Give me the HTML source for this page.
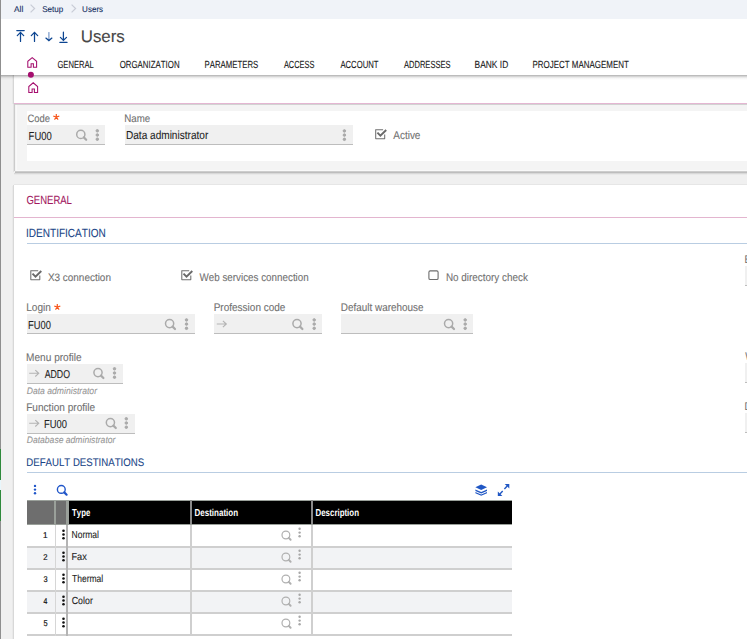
<!DOCTYPE html>
<html><head><meta charset="utf-8">
<style>
html,body{margin:0;padding:0;width:747px;height:639px;overflow:hidden;background:#f0f0f0;font-family:"Liberation Sans",sans-serif;}
.a{position:absolute;}
svg text{font-family:"Liberation Sans",sans-serif;font-kerning:none;text-rendering:geometricPrecision;}
</style></head><body>
<!-- left frame line -->
<div class="a" style="left:0;top:0;width:1px;height:639px;background:#8f8f8f"></div>
<div class="a" style="left:0;top:449px;width:1px;height:31px;background:#2f8a3c"></div>
<div class="a" style="left:0;top:480px;width:1px;height:10px;background:#e8f6fb"></div>
<div class="a" style="left:0;top:490px;width:1px;height:31px;background:#2f8a3c"></div>
<!-- breadcrumb bar -->
<div class="a" style="left:1px;top:0;width:746px;height:19px;background:#f0f3f8"></div>
<!-- header -->
<div class="a" style="left:1px;top:19px;width:746px;height:56px;background:#ffffff"></div>
<!-- panel A -->
<div class="a" style="left:14px;top:75px;width:733px;height:28px;background:#ffffff"></div>
<div class="a" style="left:13px;top:75px;width:1px;height:29px;background:#d6d6d6"></div>
<div class="a" style="left:12px;top:75px;width:1px;height:29px;background:#e8e8e8"></div>
<div class="a" style="left:14px;top:103px;width:733px;height:1px;background:#e4b6d2"></div>
<!-- card B -->
<div class="a" style="left:15px;top:104px;width:732px;height:67px;background:#f4f4f4"></div>
<div class="a" style="left:15px;top:104px;width:732px;height:1px;background:#d2d2d2"></div>
<div class="a" style="left:16px;top:105px;width:1px;height:65px;background:#f9f9f9"></div>
<div class="a" style="left:16px;top:170px;width:731px;height:1px;background:#f9f9f9"></div>
<div class="a" style="left:14px;top:104px;width:1px;height:67px;background:#cbcbcb"></div>
<div class="a" style="left:13px;top:104px;width:1px;height:68px;background:#e2e2e2"></div>
<div class="a" style="left:15px;top:171px;width:732px;height:1px;background:#cdcdcd"></div>
<div class="a" style="left:15px;top:172px;width:732px;height:1px;background:#bdbdbd"></div>
<div class="a" style="left:14px;top:173px;width:733px;height:1px;background:#d8d8d8"></div>
<div class="a" style="left:14px;top:174px;width:733px;height:1px;background:#e9e9e9"></div>
<div class="a" style="left:27px;top:111px;width:720px;height:50px;background:#ffffff"></div>
<!-- header shadow -->
<div class="a" style="left:1px;top:75px;width:746px;height:5px;background:linear-gradient(rgba(0,0,0,0.31),rgba(0,0,0,0.22) 20%,rgba(0,0,0,0.11) 40%,rgba(0,0,0,0.04) 65%,rgba(0,0,0,0))"></div>
<!-- panel C -->
<div class="a" style="left:14px;top:185px;width:733px;height:454px;background:#ffffff"></div>
<div class="a" style="left:13px;top:185px;width:1px;height:454px;background:#d8d8d8"></div>
<div class="a" style="left:12px;top:186px;width:1px;height:453px;background:#e9e9e9"></div>
<div class="a" style="left:14px;top:184px;width:733px;height:1px;background:#e6e6e6"></div>
<div class="a" style="left:14px;top:217px;width:733px;height:1px;background:#e3b5cf"></div>
<div class="a" style="left:27px;top:243px;width:720px;height:1px;background:#b9cde2"></div>
<div class="a" style="left:27px;top:472px;width:720px;height:1px;background:#b9cde2"></div>

<!-- fields: code / name -->
<div class="a" style="left:27px;top:125px;width:78px;height:19px;background:#f0f0f0;border-bottom:1px solid #bdbdbd"></div>
<div class="a" style="left:125px;top:125px;width:228px;height:19px;background:#f0f0f0;border-bottom:1px solid #bdbdbd"></div>
<!-- login row -->
<div class="a" style="left:27px;top:314px;width:168px;height:19px;background:#f0f0f0;border-bottom:1px solid #bdbdbd"></div>
<div class="a" style="left:214px;top:314px;width:108px;height:19px;background:#f0f0f0;border-bottom:1px solid #bdbdbd"></div>
<div class="a" style="left:341px;top:314px;width:132px;height:19px;background:#f0f0f0;border-bottom:1px solid #bdbdbd"></div>
<!-- menu/function profile -->
<div class="a" style="left:27px;top:364px;width:96px;height:19px;background:#f0f0f0;border-bottom:1px solid #bdbdbd"></div>
<div class="a" style="left:27px;top:414px;width:108px;height:19px;background:#f0f0f0;border-bottom:1px solid #bdbdbd"></div>
<!-- right column clipped fields -->
<div class="a" style="left:745px;top:266px;width:10px;height:19px;background:#f0f0f0;border-bottom:1px solid #bdbdbd"></div>
<div class="a" style="left:745px;top:363px;width:10px;height:19px;background:#f0f0f0;border-bottom:1px solid #bdbdbd"></div>
<div class="a" style="left:745px;top:413px;width:10px;height:19px;background:#f0f0f0;border-bottom:1px solid #bdbdbd"></div>

<!-- table -->
<div class="a" style="left:27px;top:500px;width:485px;height:24px;background:#000000"></div>
<div class="a" style="left:27px;top:500px;width:41px;height:24px;background:#6e6e6e"></div>
<div class="a" style="left:27px;top:500px;width:485px;height:1px;background:#9aa09a"></div>
<div class="a" style="left:27px;top:524px;width:485px;height:1px;background:#9aa09a"></div>
<div class="a" style="left:54px;top:500px;width:2px;height:24px;background:#9aa09a"></div>
<div class="a" style="left:66px;top:500px;width:3px;height:24px;background:#9aa09a"></div>
<div class="a" style="left:190px;top:500px;width:2px;height:24px;background:#8a8a8a"></div>
<div class="a" style="left:311px;top:500px;width:2px;height:24px;background:#8a8a8a"></div>
<!-- rows -->
<div class="a" style="left:27px;top:525px;width:485px;height:21px;background:#ffffff"></div>
<div class="a" style="left:27px;top:547px;width:485px;height:21px;background:#f2f3f5"></div>
<div class="a" style="left:27px;top:569px;width:485px;height:21px;background:#ffffff"></div>
<div class="a" style="left:27px;top:591px;width:485px;height:21px;background:#f2f3f5"></div>
<div class="a" style="left:27px;top:613px;width:485px;height:21px;background:#ffffff"></div>
<div class="a" style="left:27px;top:546px;width:485px;height:2px;background:#cfcfcf"></div>
<div class="a" style="left:27px;top:568px;width:485px;height:2px;background:#cfcfcf"></div>
<div class="a" style="left:27px;top:590px;width:485px;height:2px;background:#cfcfcf"></div>
<div class="a" style="left:27px;top:612px;width:485px;height:2px;background:#cfcfcf"></div>
<div class="a" style="left:27px;top:634px;width:485px;height:2px;background:#cfcfcf"></div>
<div class="a" style="left:55px;top:525px;width:1px;height:111px;background:#d6d6d6"></div>
<div class="a" style="left:66px;top:525px;width:2px;height:111px;background:#b4b4b4"></div>
<div class="a" style="left:190px;top:525px;width:2px;height:111px;background:#cfcfcf"></div>
<div class="a" style="left:311px;top:525px;width:2px;height:111px;background:#cfcfcf"></div>

<svg class="a" style="left:0;top:0" width="747" height="639" viewBox="0 0 747 639">
<defs>
  <g id="srch"><circle cx="0" cy="0" r="4.1" fill="none" stroke-width="1.5"/><path d="M3,3 L5.4,5.4" stroke-width="2.2" stroke-linecap="round"/></g>
  <g id="keb"><circle cx="0" cy="0" r="1.25"/><circle cx="0" cy="4.2" r="1.25"/><circle cx="0" cy="8.4" r="1.25"/></g>
  <g id="arr"><path d="M0,0 H9.5 M6.1,-3.2 L9.5,0 L6.1,3.2" fill="none" stroke-width="1.15"/></g>
  <g id="home"><path d="M0.5,10.3 V4.3 L4.9,0.6 L9.3,4.3 V10.3 H6.1 V6.7 H3.8 V10.3 Z" fill="none" stroke-width="1.05" stroke-linejoin="miter"/></g>
  <g id="chk"><path d="M7.9,0.5 H0.6 Q0.5,0.5 0.5,0.6 V9.4 Q0.5,9.5 0.6,9.5 H9.4 Q9.5,9.5 9.5,9.4 V5.3" fill="none" stroke="#707070" stroke-width="1.05"/><path d="M2.2,3.4 L5.2,6.5 L11,0.8" fill="none" stroke="#6a6a6a" stroke-width="1.9"/></g>
</defs>
<!-- breadcrumb chevrons -->
<path d="M30.6,4.6 L34.6,8.5 L30.6,12.4" fill="none" stroke="#c8ccd6" stroke-width="1.2"/>
<path d="M71.6,4.6 L75.6,8.5 L71.6,12.4" fill="none" stroke="#c8ccd6" stroke-width="1.2"/>
<!-- nav arrows -->
<g fill="none" stroke="#0c4591" stroke-width="1.25" stroke-linecap="round">
  <path d="M16.8,30.5 H24.2"/><path d="M20.5,41.4 V32.3 M17.3,35.6 L20.5,32.3 L23.7,35.6"/>
  <path d="M34.5,41.4 V32.3 M31.3,35.6 L34.5,32.3 L37.7,35.6"/>
  <path d="M48.9,32.6 V39.5" stroke="#7d9ccb"/><path d="M45.9,38.1 L48.9,40.6 L51.9,38.1"/>
  <path d="M63.4,32.2 V40.2 M60.4,37.4 L63.4,40.4 L66.5,37.4 M59.9,42.4 H67"/>
</g>
<!-- home icons + dot -->
<use href="#home" x="27.3" y="57" stroke="#a50e6e"/>
<circle cx="30.9" cy="74.8" r="3" fill="#a50e6e"/>
<use href="#home" x="28.3" y="82.2" stroke="#a50e6e"/>
<!-- field icons -->
<g stroke="#aaaaaa" fill="#aaaaaa">
  <use href="#srch" x="80.8" y="134.4"/><use href="#keb" x="97.3" y="130.8"/>
  <use href="#keb" x="344.4" y="130.9"/>
  <use href="#srch" x="169.6" y="323.6"/><use href="#keb" x="186.5" y="319.9"/>
  <use href="#srch" x="297" y="323.6"/><use href="#keb" x="314.2" y="319.9"/>
  <use href="#srch" x="448.6" y="323.6"/><use href="#keb" x="465.2" y="319.9"/>
  <use href="#srch" x="98" y="372.6"/><use href="#keb" x="114.5" y="368.8"/>
  <use href="#srch" x="110.4" y="422.6"/><use href="#keb" x="126.3" y="418.8"/>
</g>
<g stroke="#b3b3b3"><use href="#arr" x="216.8" y="324"/><use href="#arr" x="29.2" y="373.3"/><use href="#arr" x="29.2" y="423.3"/></g>
<!-- checkboxes -->
<use href="#chk" x="30.3" y="270.2"/>
<use href="#chk" x="181.3" y="270.2"/>
<use href="#chk" x="375.2" y="129.2"/>
<rect x="428.9" y="270.9" width="9.2" height="8.6" rx="1.3" fill="none" stroke="#6d6d6d" stroke-width="1.1"/>
<!-- asterisks -->
<g id="ast" fill="none" stroke="#f7561c" stroke-width="1.2" stroke-linecap="butt">
<path d="M56.3,114 V117 M53.3,116.2 L56.3,117 L59.3,116.2 M54.5,119.6 L56.3,117 L58.1,119.6"/>
</g>
<use href="#ast" x="1" y="190"/>
<!-- table toolbar -->
<g fill="#1f55c9"><circle cx="35" cy="485.9" r="1.2"/><circle cx="35" cy="489.6" r="1.2"/><circle cx="35" cy="493.3" r="1.2"/></g>
<g stroke="#1f55c9" fill="none"><circle cx="61.3" cy="489.4" r="3.9" stroke-width="1.4"/><path d="M64.3,492.4 L66.6,494.7" stroke-width="2.2" stroke-linecap="round"/></g>
<!-- layers icon -->
<g fill="#2057c4">
  <path d="M481.2,484.6 L487,487.3 L481.2,490 L475.4,487.3 Z"/>
  <path d="M475.4,489.4 L481.2,492.1 L487,489.4 L487,490.9 L481.2,493.6 L475.4,490.9 Z"/>
  <path d="M475.4,491.9 L481.2,494.6 L487,491.9 L487,493.2 L481.2,495.7 L475.4,493.2 Z"/>
</g>
<!-- expand icon -->
<g fill="#2057c4">
  <path d="M509.3,484 V488.6 L504.7,484 Z"/>
  <path d="M497.8,496 V491.4 L502.4,496 Z"/>
</g>
<g stroke="#2057c4" stroke-width="1.4" fill="none"><path d="M507.2,486.1 L504.4,488.9"/><path d="M499.9,493.9 L502.7,491.1"/></g>
<!-- table row icons -->
<defs><g id="rk"><circle cx="0" cy="0" r="1.3"/><circle cx="0" cy="3.75" r="1.3"/><circle cx="0" cy="7.5" r="1.3"/></g>
<g id="dsr"><circle cx="0" cy="0" r="3.9" fill="none" stroke="#b0b0b0" stroke-width="1.2"/><path d="M2.9,2.9 L4.7,4.7" stroke="#b0b0b0" stroke-width="2" stroke-linecap="round"/>
<circle cx="13.7" cy="-6.2" r="1.2" fill="#a8a8a8"/><circle cx="13.7" cy="-2.4" r="1.2" fill="#a8a8a8"/><circle cx="13.7" cy="1.3" r="1.2" fill="#a8a8a8"/></g></defs>
<g fill="#111">
  <use href="#rk" x="63.5" y="530.8"/><use href="#rk" x="63.5" y="552.8"/><use href="#rk" x="63.5" y="574.8"/><use href="#rk" x="63.5" y="596.8"/><use href="#rk" x="63.5" y="618.8"/>
</g>
<use href="#dsr" x="285.9" y="535"/><use href="#dsr" x="285.9" y="557"/><use href="#dsr" x="285.9" y="579"/><use href="#dsr" x="285.9" y="601"/><use href="#dsr" x="285.9" y="623"/>
<text transform="matrix(1 0 0 0.995 0 0.060)" x="13.98" y="12.00" font-size="8.47" fill="#132d60" stroke="#132d60" stroke-width="0.1" textLength="9.27" lengthAdjust="spacingAndGlyphs">All</text>
<text transform="matrix(1 0 0 0.995 0 0.060)" x="42.13" y="12.00" font-size="8.47" fill="#132d60" stroke="#132d60" stroke-width="0.1" textLength="21.11" lengthAdjust="spacingAndGlyphs">Setup</text>
<text transform="matrix(1 0 0 0.995 0 0.060)" x="82.08" y="12.00" font-size="8.47" fill="#132d60" stroke="#132d60" stroke-width="0.1" textLength="21.01" lengthAdjust="spacingAndGlyphs">Users</text>
<text transform="matrix(1 0 0 0.995 0 0.208)" x="80.70" y="41.60" font-size="16.95" fill="#474747" stroke="#474747" stroke-width="0.1" textLength="44.11" lengthAdjust="spacingAndGlyphs">Users</text>
<text transform="matrix(1 0 0 0.995 0 0.340)" x="57.42" y="68.00" font-size="10.37" fill="#1a1a1a" stroke="#1a1a1a" stroke-width="0.12" textLength="36.33" lengthAdjust="spacingAndGlyphs">GENERAL</text>
<text transform="matrix(1 0 0 0.995 0 0.340)" x="119.63" y="68.00" font-size="10.37" fill="#1a1a1a" stroke="#1a1a1a" stroke-width="0.12" textLength="60.02" lengthAdjust="spacingAndGlyphs">ORGANIZATION</text>
<text transform="matrix(1 0 0 0.995 0 0.340)" x="204.56" y="68.00" font-size="10.37" fill="#1a1a1a" stroke="#1a1a1a" stroke-width="0.12" textLength="53.70" lengthAdjust="spacingAndGlyphs">PARAMETERS</text>
<text transform="matrix(1 0 0 0.995 0 0.340)" x="283.89" y="68.00" font-size="10.37" fill="#1a1a1a" stroke="#1a1a1a" stroke-width="0.12" textLength="30.56" lengthAdjust="spacingAndGlyphs">ACCESS</text>
<text transform="matrix(1 0 0 0.995 0 0.340)" x="340.38" y="68.00" font-size="10.37" fill="#1a1a1a" stroke="#1a1a1a" stroke-width="0.12" textLength="38.19" lengthAdjust="spacingAndGlyphs">ACCOUNT</text>
<text transform="matrix(1 0 0 0.995 0 0.340)" x="403.99" y="68.00" font-size="10.37" fill="#1a1a1a" stroke="#1a1a1a" stroke-width="0.12" textLength="46.56" lengthAdjust="spacingAndGlyphs">ADDRESSES</text>
<text transform="matrix(1 0 0 0.995 0 0.340)" x="474.61" y="68.00" font-size="10.37" fill="#1a1a1a" stroke="#1a1a1a" stroke-width="0.12" textLength="33.59" lengthAdjust="spacingAndGlyphs">BANK ID</text>
<text transform="matrix(1 0 0 0.995 0 0.340)" x="532.55" y="68.00" font-size="10.37" fill="#1a1a1a" stroke="#1a1a1a" stroke-width="0.12" textLength="96.23" lengthAdjust="spacingAndGlyphs">PROJECT MANAGEMENT</text>
<text transform="matrix(1 0 0 0.995 0 0.609)" x="27.52" y="121.70" font-size="10.81" fill="#717171" stroke="#717171" stroke-width="0.1" textLength="22.60" lengthAdjust="spacingAndGlyphs">Code</text>
<text transform="matrix(1 0 0 0.995 0 0.609)" x="124.30" y="121.70" font-size="10.81" fill="#717171" stroke="#717171" stroke-width="0.1" textLength="25.93" lengthAdjust="spacingAndGlyphs">Name</text>
<text transform="matrix(1 0 0 0.995 0 0.700)" x="28.62" y="140.00" font-size="11.69" fill="#1f1f1f" stroke="#1f1f1f" stroke-width="0.1" textLength="23.15" lengthAdjust="spacingAndGlyphs">FU00</text>
<text transform="matrix(1 0 0 0.995 0 0.695)" x="125.97" y="139.00" font-size="11.69" fill="#1f1f1f" stroke="#1f1f1f" stroke-width="0.1" textLength="82.29" lengthAdjust="spacingAndGlyphs">Data administrator</text>
<text transform="matrix(1 0 0 0.995 0 0.695)" x="393.28" y="139.00" font-size="11.39" fill="#717171" stroke="#717171" stroke-width="0.1" textLength="27.16" lengthAdjust="spacingAndGlyphs">Active</text>
<text transform="matrix(1 0 0 0.995 0 1.020)" x="26.42" y="204.00" font-size="11.83" fill="#a2185f" stroke="#a2185f" stroke-width="0.1" textLength="45.49" lengthAdjust="spacingAndGlyphs">GENERAL</text>
<text transform="matrix(1 0 0 0.995 0 1.186)" x="26.07" y="237.20" font-size="11.83" fill="#1a4587" stroke="#1a4587" stroke-width="0.1" textLength="79.64" lengthAdjust="spacingAndGlyphs">IDENTIFICATION</text>
<text transform="matrix(1 0 0 0.995 0 1.404)" x="47.88" y="280.70" font-size="10.81" fill="#717171" stroke="#717171" stroke-width="0.1" textLength="63.07" lengthAdjust="spacingAndGlyphs">X3 connection</text>
<text transform="matrix(1 0 0 0.995 0 1.405)" x="199.46" y="281.00" font-size="11.10" fill="#717171" stroke="#717171" stroke-width="0.1" textLength="109.28" lengthAdjust="spacingAndGlyphs">Web services connection</text>
<text transform="matrix(1 0 0 0.995 0 1.405)" x="445.89" y="281.00" font-size="11.10" fill="#717171" stroke="#717171" stroke-width="0.1" textLength="82.10" lengthAdjust="spacingAndGlyphs">No directory check</text>
<text transform="matrix(1 0 0 0.995 0 1.555)" x="26.22" y="310.90" font-size="11.10" fill="#717171" stroke="#717171" stroke-width="0.1" textLength="24.74" lengthAdjust="spacingAndGlyphs">Login</text>
<text transform="matrix(1 0 0 0.995 0 1.645)" x="28.03" y="328.90" font-size="11.69" fill="#1f1f1f" stroke="#1f1f1f" stroke-width="0.1" textLength="22.83" lengthAdjust="spacingAndGlyphs">FU00</text>
<text transform="matrix(1 0 0 0.995 0 1.555)" x="213.68" y="310.90" font-size="11.10" fill="#717171" stroke="#717171" stroke-width="0.1" textLength="71.77" lengthAdjust="spacingAndGlyphs">Profession code</text>
<text transform="matrix(1 0 0 0.995 0 1.555)" x="340.79" y="310.90" font-size="11.10" fill="#717171" stroke="#717171" stroke-width="0.1" textLength="82.76" lengthAdjust="spacingAndGlyphs">Default warehouse</text>
<text transform="matrix(1 0 0 0.995 0 1.805)" x="26.07" y="361.00" font-size="11.10" fill="#717171" stroke="#717171" stroke-width="0.1" textLength="55.58" lengthAdjust="spacingAndGlyphs">Menu profile</text>
<text transform="matrix(1 0 0 0.995 0 1.890)" x="44.68" y="377.90" font-size="11.54" fill="#1f1f1f" stroke="#1f1f1f" stroke-width="0.1" textLength="25.34" lengthAdjust="spacingAndGlyphs">ADDO</text>
<text transform="matrix(1 0 0 0.995 0 1.970)" x="26.74" y="394.00" font-size="9.64" fill="#969696" font-style="italic" stroke="#969696" stroke-width="0.1" textLength="70.27" lengthAdjust="spacingAndGlyphs">Data administrator</text>
<text transform="matrix(1 0 0 0.995 0 2.054)" x="26.17" y="410.80" font-size="11.10" fill="#717171" stroke="#717171" stroke-width="0.1" textLength="69.08" lengthAdjust="spacingAndGlyphs">Function profile</text>
<text transform="matrix(1 0 0 0.995 0 2.140)" x="43.93" y="427.90" font-size="11.54" fill="#1f1f1f" stroke="#1f1f1f" stroke-width="0.1" textLength="22.94" lengthAdjust="spacingAndGlyphs">FU00</text>
<text transform="matrix(1 0 0 0.995 0 2.214)" x="26.74" y="442.80" font-size="9.64" fill="#969696" font-style="italic" stroke="#969696" stroke-width="0.1" textLength="88.67" lengthAdjust="spacingAndGlyphs">Database administrator</text>
<text transform="matrix(1 0 0 0.995 0 2.330)" x="26.31" y="465.90" font-size="11.10" fill="#1a4587" stroke="#1a4587" stroke-width="0.1" textLength="117.83" lengthAdjust="spacingAndGlyphs">DEFAULT DESTINATIONS</text>
<text transform="matrix(1 0 0 0.995 0 2.579)" x="72.11" y="515.80" font-size="10.23" fill="#ffffff" font-weight="bold" textLength="18.15" lengthAdjust="spacingAndGlyphs">Type</text>
<text transform="matrix(1 0 0 0.995 0 2.579)" x="194.46" y="515.80" font-size="10.23" fill="#ffffff" font-weight="bold" textLength="43.63" lengthAdjust="spacingAndGlyphs">Destination</text>
<text transform="matrix(1 0 0 0.995 0 2.579)" x="315.47" y="515.80" font-size="10.23" fill="#ffffff" font-weight="bold" textLength="43.52" lengthAdjust="spacingAndGlyphs">Description</text>
<text transform="matrix(1 0 0 0.995 0 2.689)" x="43.08" y="537.80" font-size="8.47" fill="#111111" stroke="#111111" stroke-width="0.2" textLength="4.51" lengthAdjust="spacingAndGlyphs">1</text>
<text transform="matrix(1 0 0 0.995 0 2.689)" x="71.50" y="537.80" font-size="10.23" fill="#222222" stroke="#222222" stroke-width="0.1" textLength="27.47" lengthAdjust="spacingAndGlyphs">Normal</text>
<text transform="matrix(1 0 0 0.995 0 2.799)" x="43.31" y="559.80" font-size="8.47" fill="#111111" stroke="#111111" stroke-width="0.2" textLength="4.27" lengthAdjust="spacingAndGlyphs">2</text>
<text transform="matrix(1 0 0 0.995 0 2.799)" x="71.44" y="559.80" font-size="10.23" fill="#222222" stroke="#222222" stroke-width="0.1" textLength="15.35" lengthAdjust="spacingAndGlyphs">Fax</text>
<text transform="matrix(1 0 0 0.995 0 2.909)" x="43.42" y="581.80" font-size="8.47" fill="#111111" stroke="#111111" stroke-width="0.2" textLength="4.11" lengthAdjust="spacingAndGlyphs">3</text>
<text transform="matrix(1 0 0 0.995 0 2.909)" x="72.01" y="581.80" font-size="10.23" fill="#222222" stroke="#222222" stroke-width="0.1" textLength="31.26" lengthAdjust="spacingAndGlyphs">Thermal</text>
<text transform="matrix(1 0 0 0.995 0 3.019)" x="43.54" y="603.80" font-size="8.47" fill="#111111" stroke="#111111" stroke-width="0.2" textLength="3.86" lengthAdjust="spacingAndGlyphs">4</text>
<text transform="matrix(1 0 0 0.995 0 3.019)" x="71.75" y="603.80" font-size="10.23" fill="#222222" stroke="#222222" stroke-width="0.1" textLength="21.09" lengthAdjust="spacingAndGlyphs">Color</text>
<text transform="matrix(1 0 0 0.995 0 3.129)" x="43.40" y="625.80" font-size="8.47" fill="#111111" stroke="#111111" stroke-width="0.2" textLength="4.11" lengthAdjust="spacingAndGlyphs">5</text>
<text transform="matrix(1 0 0 0.995 0 1.314)" x="744.42" y="262.80" font-size="11.10" fill="#717171" stroke="#717171" stroke-width="0.1" textLength="21.65" lengthAdjust="spacingAndGlyphs">Bank</text>
<text transform="matrix(1 0 0 0.995 0 1.798)" x="745.16" y="359.50" font-size="11.10" fill="#717171" stroke="#717171" stroke-width="0.1" textLength="48.58" lengthAdjust="spacingAndGlyphs">Warehouse</text>
<text transform="matrix(1 0 0 0.995 0 2.050)" x="744.42" y="410.00" font-size="11.10" fill="#717171" stroke="#717171" stroke-width="0.1" textLength="30.10" lengthAdjust="spacingAndGlyphs">Default</text>
</svg>
</body></html>
